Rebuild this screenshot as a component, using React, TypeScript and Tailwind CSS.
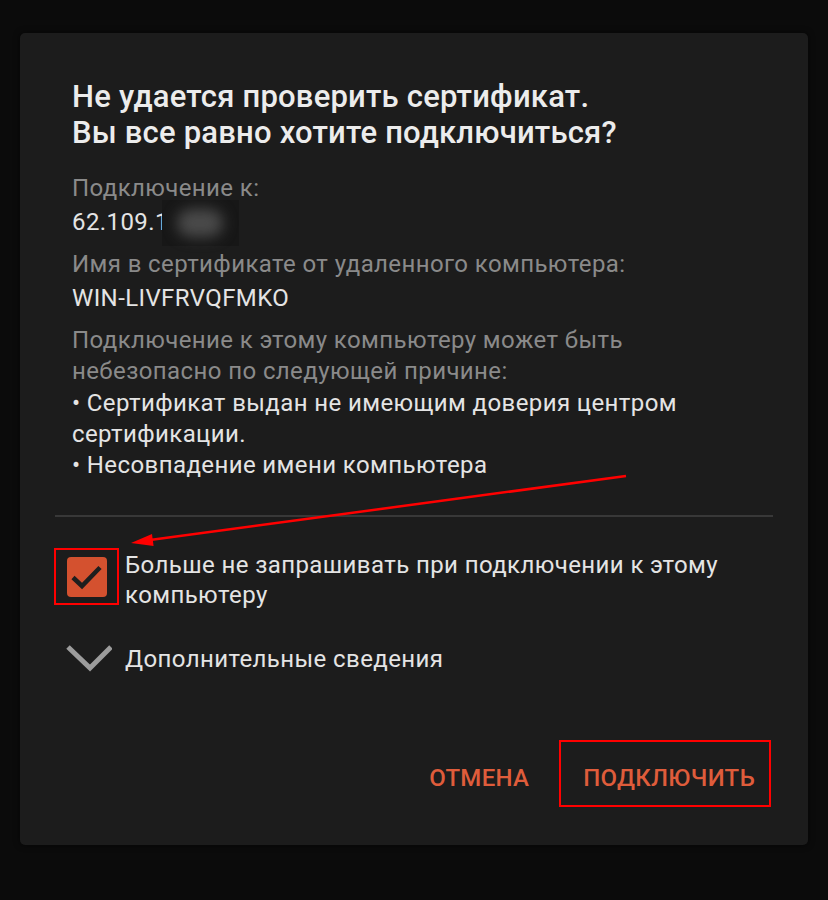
export default function App() {
  return (
    <div className="relative min-h-[900px] w-full bg-[#0b0b0b] pt-[33px] font-['Roboto',sans-serif]">
      <div className="mx-[20px] flex h-[812px] w-[788px] flex-col rounded-[5px] bg-[#1c1c1c] shadow-[0_0_6px_rgba(0,0,0,0.6)]">
        {/* Header + details */}
        <div className="pl-[52px] pr-[30px] pt-[46px]">
          <h1 className="text-[31px] font-medium leading-[36px] tracking-[0.2px] text-[#ececec]">
            Не удается проверить сертификат.
            <br />
            Вы все равно хотите подключиться?
          </h1>

          <div className="mt-[22px] text-[24px] leading-[31px] tracking-[0.4px]">
            <div className="text-[#8a8a8a]">Подключение к:</div>
            <div className="mt-[3px] flex h-[31px] items-center text-[#e4e4e4]">
              <span>62.109.1</span>
              <span className="ml-[-7px] -my-[8px] flex h-[46px] w-[77px] items-center justify-center bg-[#171717]">
                <span className="h-[28px] w-[46px] rounded-full bg-[#4a4a4a] blur-[7px]" />
              </span>
            </div>

            <div className="mt-[11px] text-[#8a8a8a]">Имя в сертификате от удаленного компьютера:</div>
            <div className="mt-[3px] text-[#e4e4e4]">WIN-LIVFRVQFMKO</div>

            <div className="mt-[11px] text-[#8a8a8a]">
              Подключение к этому компьютеру может быть
              <br />
              небезопасно по следующей причине:
            </div>
            <div className="mt-[1px] text-[#e4e4e4]">
              • Сертификат выдан не имеющим доверия центром
              <br />
              сертификации.
            </div>
            <div className="text-[#e4e4e4]">• Несовпадение имени компьютера</div>
          </div>
        </div>

        <div className="mx-[35px] mt-[34px] h-[2px] bg-[#383838]" />

        {/* Checkbox row */}
        <div className="mt-[31px] flex items-start pl-[34px] pr-[30px]">
          <div className="flex h-[57px] w-[65px] shrink-0 items-center justify-center border-2 border-[#ff0000]">
            <div className="flex h-[40px] w-[40px] items-center justify-center rounded-[4px] bg-[#d4512f]">
              <svg width="40" height="40" viewBox="0 0 40 40">
                <path d="M6 20.5 L15 29 L33 10.5" fill="none" stroke="#1e1e1e" strokeWidth="4.5" />
              </svg>
            </div>
          </div>
          <div className="ml-[6px] mt-[2px] text-[24px] leading-[30px] tracking-[0.4px] text-[#e4e4e4]">
            Больше не запрашивать при подключении к этому
            <br />
            компьютеру
          </div>
        </div>

        {/* Details expander */}
        <div className="mt-[34px] flex items-center pl-[46px]">
          <svg width="46" height="30" viewBox="0 0 46 30">
            <path d="M2 3 L24 24 L45 3" fill="none" stroke="#9c9c9c" strokeWidth="5" />
          </svg>
          <span className="ml-[13px] text-[24px] leading-[30px] tracking-[0.4px] text-[#e4e4e4]">Дополнительные сведения</span>
        </div>

        {/* Buttons */}
        <div className="mt-auto flex items-center justify-end pb-[38px] pr-[37px]">
          <button className="pt-[8px] text-[24px] font-medium tracking-[0.3px] text-[#df5c3b]">ОТМЕНА</button>
          <button className="ml-[30px] flex h-[67px] items-center border-2 border-[#ff0000] pl-[22px] pr-[14px] pt-[8px] text-[24px] font-medium tracking-[0.3px] text-[#df5c3b]">
            ПОДКЛЮЧИТЬ
          </button>
        </div>
      </div>

      {/* annotation arrow */}
      <svg className="pointer-events-none absolute left-0 top-0" width="828" height="900" viewBox="0 0 828 900">
        <line x1="626" y1="476" x2="150" y2="540" stroke="#ff0000" strokeWidth="2.5" />
        <polygon points="131,543 153.6,546 152,534" fill="#ff0000" />
      </svg>
    </div>
  )
}
